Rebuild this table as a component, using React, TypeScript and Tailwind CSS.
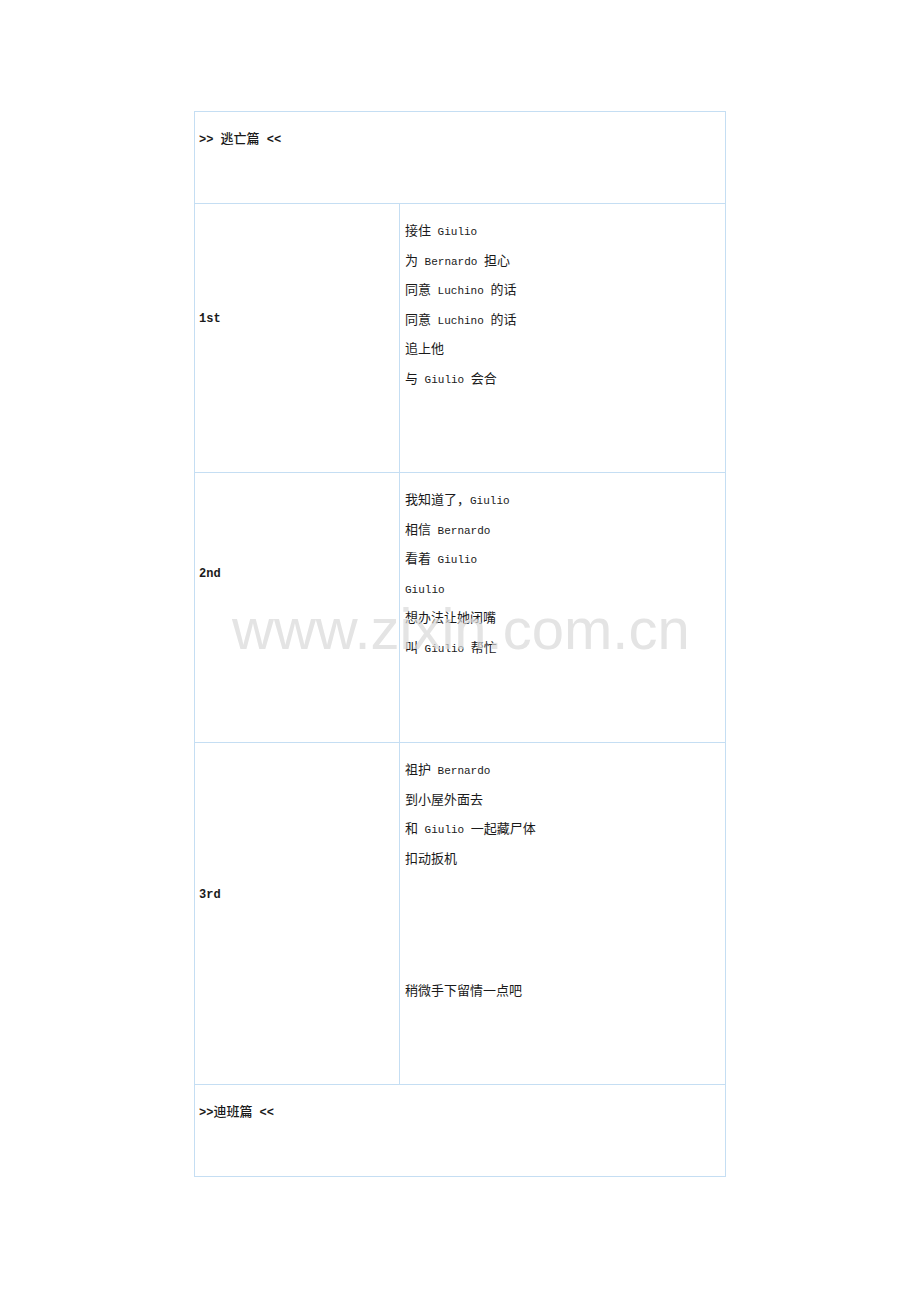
import React from "react";

// latin runs are set half-width, like the song-style font of the original
const L = ({ children }: { children: React.ReactNode }) => (
  <span className="font-['Liberation_Mono',monospace] text-[11px]">{children}</span>
);

const Line = ({ children }: { children: React.ReactNode }) => (
  <div className="h-[29.6px] leading-[29.6px] whitespace-pre">{children}</div>
);

const rows = [
  {
    label: "1st",
    labelTop: "pt-[101px]",
    height: "h-[269px]",
    lines: [
      <>接住<L> Giulio</L></>,
      <>为<L> Bernardo </L>担心</>,
      <>同意<L> Luchino </L>的话</>,
      <>同意<L> Luchino </L>的话</>,
      <>追上他</>,
      <>与<L> Giulio </L>会合</>,
    ],
  },
  {
    label: "2nd",
    labelTop: "pt-[87px]",
    height: "h-[270px]",
    lines: [
      <>我知道了，<L>Giulio</L></>,
      <>相信<L> Bernardo</L></>,
      <>看着<L> Giulio</L></>,
      <><L>Giulio</L></>,
      <>想办法让她闭嘴</>,
      <>叫<L> Giulio </L>帮忙</>,
    ],
  },
];

export default function App() {
  return (
    <div className="relative min-h-[1302px] w-full bg-white text-[#1a1a1a] font-['Noto_Sans_CJK_SC',sans-serif] text-[13px]">
      <div className="flex justify-center pt-[111px]">
        <div className="relative z-10 w-[532px] border-t border-l border-r border-[#c5def3]">
          {/* header */}
          <div className="h-[92px] border-b border-[#c5def3] pl-[4px] pt-[11px]">
            <div className="h-[29.6px] leading-[29.6px] font-medium whitespace-pre">
              <span className="font-['Liberation_Mono',monospace] text-[12px] font-bold">&gt;&gt; </span>逃亡篇<span className="font-['Liberation_Mono',monospace] text-[12px] font-bold"> &lt;&lt;</span>
            </div>
          </div>

          {rows.map((r) => (
            <div key={r.label} className={`grid grid-cols-[205px_1fr] border-b border-[#c5def3] ${r.height}`}>
              <div className={`border-r border-[#c5def3] pl-[4px] ${r.labelTop}`}>
                <div className="h-[29.6px] leading-[29.6px] font-['Liberation_Mono',monospace] text-[12px] font-bold">{r.label}</div>
              </div>
              <div className="pl-[5px] pt-[11px]">
                {r.lines.map((l, i) => (
                  <Line key={i}>{l}</Line>
                ))}
              </div>
            </div>
          ))}

          <div className="grid h-[342px] grid-cols-[205px_1fr] border-b border-[#c5def3]">
            <div className="border-r border-[#c5def3] pl-[4px] pt-[138px]">
              <div className="h-[29.6px] leading-[29.6px] font-['Liberation_Mono',monospace] text-[12px] font-bold">3rd</div>
            </div>
            <div className="pl-[5px] pt-[11px]">
              <Line>祖护<L> Bernardo</L></Line>
              <Line>到小屋外面去</Line>
              <Line>和<L> Giulio </L>一起藏尸体</Line>
              <Line>扣动扳机</Line>
              <div className="mt-[103px]">
                <Line>稍微手下留情一点吧</Line>
              </div>
            </div>
          </div>

          {/* footer */}
          <div className="h-[92px] border-b border-[#c5def3] pl-[4px] pt-[11px]">
            <div className="h-[29.6px] leading-[29.6px] font-medium whitespace-pre">
              <span className="font-['Liberation_Mono',monospace] text-[12px] font-bold">&gt;&gt;</span>迪班篇<span className="font-['Liberation_Mono',monospace] text-[12px] font-bold"> &lt;&lt;</span>
            </div>
          </div>
        </div>
      </div>

      {/* watermark */}
      <div className="pointer-events-none absolute left-[232px] top-[600px] z-20 font-['Liberation_Sans',sans-serif] text-[58px] leading-none text-[#d9d9d9] opacity-70">
        www.zixin.com.cn
      </div>
    </div>
  );
}
